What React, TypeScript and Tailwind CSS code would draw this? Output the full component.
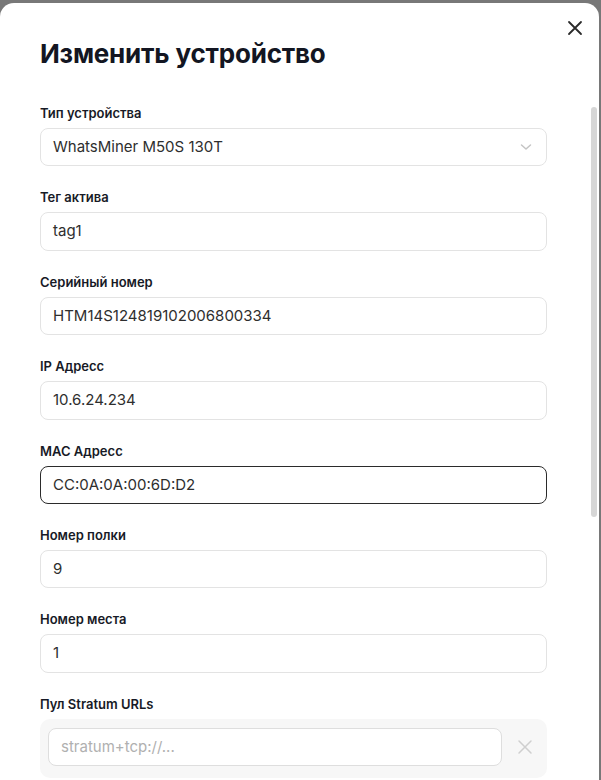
import React from 'react';

const font = { fontFamily: 'Inter, "Noto Sans", sans-serif' };

const fields = [
  { label: 'Тег актива', value: 'tag1' },
  { label: 'Серийный номер', value: 'HTM14S124819102006800334' },
  { label: 'IP Адресс', value: '10.6.24.234' },
  { label: 'MAC Адресс', value: 'CC:0A:0A:00:6D:D2', focused: true },
  { label: 'Номер полки', value: '9' },
  { label: 'Номер места', value: '1' },
];

const Label = ({ children }: { children: React.ReactNode }) => (
  <div className="text-[13px] leading-4 font-semibold text-[#171a26] mb-[7px]">{children}</div>
);

export default function App() {
  return (
    <div className="w-[601px] h-[780px] bg-[#787878] pt-[3px] pr-[2px] overflow-hidden" style={font}>
      <div className="relative h-full bg-white rounded-t-[14px] overflow-hidden">
        <button className="absolute right-[14px] top-[15px] w-[20px] h-[20px] flex items-center justify-center text-[#2a2a2a]">
          <svg width="16" height="16" viewBox="0 0 16 16" fill="none" stroke="currentColor" strokeWidth="1.8" strokeLinecap="round">
            <path d="M2 2 L14 14 M14 2 L2 14" />
          </svg>
        </button>

        <div className="absolute right-[2px] top-[104px] w-[6px] h-[410px] rounded-full bg-[#d6d6d6]" />

        <div className="pl-[40px] pr-[52px] pt-[35px]">
          <h1 className="text-[26px] leading-8 font-bold text-[#131622] tracking-[-0.2px]">Изменить устройство</h1>

          <div className="mt-[35px] flex flex-col gap-[23px]">
            <div>
              <Label>Тип устройства</Label>
              <div className="h-[38.4px] border border-[#e3e3e3] rounded-[8px] flex items-center justify-between pl-[12px] pr-[14px]">
                <span className="text-[15px] text-[#2e2e2e]">WhatsMiner M50S 130T</span>
                <svg width="12" height="8" viewBox="0 0 12 8" fill="none" stroke="#c4c4c4" strokeWidth="1.5" strokeLinecap="round" strokeLinejoin="round">
                  <path d="M1.5 2 L6 6 L10.5 2" />
                </svg>
              </div>
            </div>

            {fields.map((f) => (
              <div key={f.label}>
                <Label>{f.label}</Label>
                <div
                  className={
                    f.focused
                      ? 'h-[38.4px] border border-[#2b2b2b] rounded-[8px] flex items-center pl-[12px]'
                      : 'h-[38.4px] border border-[#e3e3e3] rounded-[8px] flex items-center pl-[12px]'
                  }
                >
                  <span className="text-[15px] text-[#2e2e2e]">{f.value}</span>
                </div>
              </div>
            ))}

            <div>
              <Label>Пул Stratum URLs</Label>
              <div className="bg-[#f7f7f7] rounded-[10px] px-[8px] pt-[9px] pb-[12px] flex items-center gap-[8px]">
                <div className="flex-1 h-[38.4px] bg-white border border-[#dedede] rounded-[8px] flex items-center pl-[12px]">
                  <span className="text-[15px] text-[#b0b0b0]">stratum+tcp://...</span>
                </div>
                <svg width="29" height="16" viewBox="0 0 29 16" fill="none" stroke="#cfcfcf" strokeWidth="1.5" strokeLinecap="round">
                  <path d="M9 2 L21 14 M21 2 L9 14" />
                </svg>
              </div>
            </div>
          </div>
        </div>
      </div>
    </div>
  );
}
